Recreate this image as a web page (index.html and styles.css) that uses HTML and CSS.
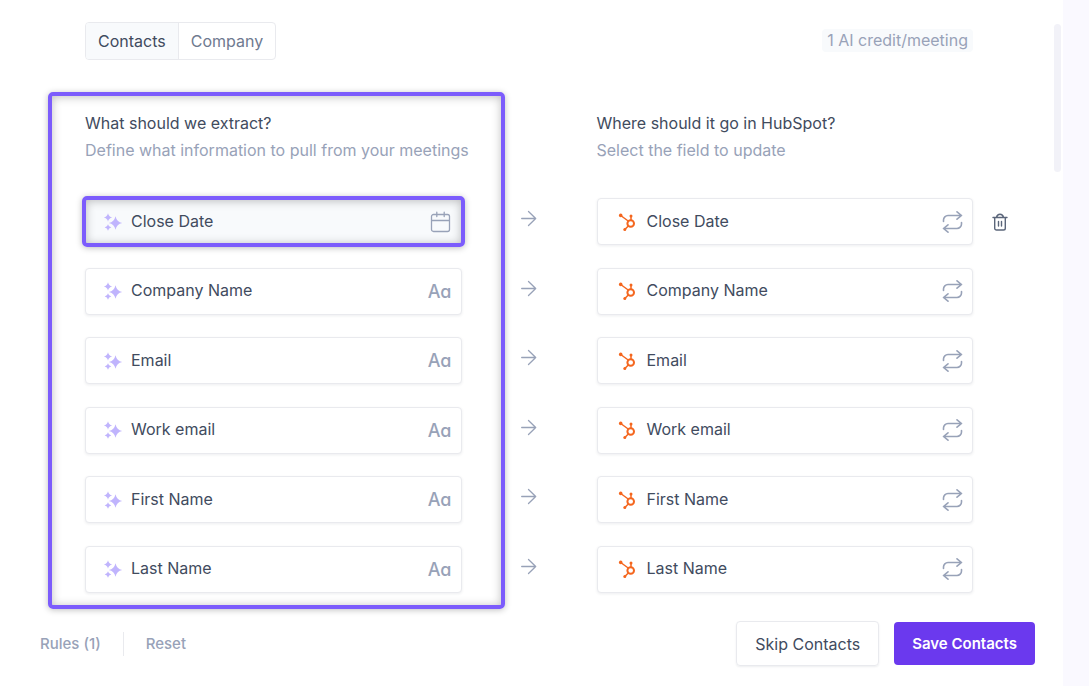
FILE: index.html
```html
<!DOCTYPE html>
<html lang="en">
<head>
    <meta charset="UTF-8">
    <meta name="viewport" content="width=device-width, initial-scale=1.0">
    <title>HubSpot field mapping</title>
    <link rel="stylesheet" href="styles.css">
</head>
<body>

    <!-- Icon sprites -->
    <svg class="sprites" aria-hidden="true">
        <symbol id="i-sparkle" viewBox="0 0 20 20">
            <path fill="currentColor" d="M12.5 4.2Q13.7 9.8 19.2 11Q13.7 12.2 12.5 17.8Q11.3 12.2 5.8 11Q11.3 9.8 12.5 4.2ZM5 1.3Q5.7 4.8 9.2 5.5Q5.7 6.2 5 9.7Q4.3 6.2 0.8 5.5Q4.3 4.8 5 1.3ZM5 12.2Q5.6 14.9 8.3 15.5Q5.6 16.1 5 18.8Q4.4 16.1 1.7 15.5Q4.4 14.9 5 12.2Z"/>
        </symbol>
        <symbol id="i-hubspot" viewBox="0 0 20 20">
            <g fill="none" stroke="currentColor">
                <circle cx="13.7" cy="11.5" r="3.3" stroke-width="2"/>
                <path stroke-width="1.5" d="M3.7 3.5L11.2 9M14 4v4.2M11.3 13.9L7.8 17.5"/>
            </g>
            <g fill="currentColor">
                <circle cx="3.7" cy="3.4" r="1.8"/>
                <circle cx="14" cy="4" r="1.5"/>
                <circle cx="7.8" cy="17.6" r="1.5"/>
            </g>
        </symbol>
        <symbol id="i-swap" viewBox="0 0 22 22">
            <path fill="none" stroke="currentColor" stroke-width="1.6" stroke-linecap="round" stroke-linejoin="round" d="M2.5 10.5V9A4.5 4.5 0 0 1 7 4.5h13.5M16 .8l4.5 3.7L16 8.2M20.5 11.5V13a4.5 4.5 0 0 1-4.5 4.5H2.5M7 13.8l-4.5 3.7L7 21.2"/>
        </symbol>
        <symbol id="i-calendar" viewBox="0 0 22 22">
            <path fill="none" stroke="currentColor" stroke-width="1.3" stroke-linecap="round" d="M3.5 3.5h14a2 2 0 0 1 2 2v13a2 2 0 0 1-2 2h-14a2 2 0 0 1-2-2v-13a2 2 0 0 1 2-2ZM1.5 9.5h18M6.8 1.2v4.3M14.2 1.2v4.3"/>
        </symbol>
        <symbol id="i-arrow" viewBox="0 0 16 16">
            <path fill="none" stroke="currentColor" stroke-width="1.3" stroke-linecap="round" stroke-linejoin="round" d="M.7 8h14M7.5 1l7.2 7-7.2 7"/>
        </symbol>
        <symbol id="i-trash" viewBox="0 0 16 18">
            <path fill="none" stroke="currentColor" stroke-width="1.4" stroke-linecap="round" stroke-linejoin="round" d="M1 4.5h14M4.5 4.3C5 2 6 1.2 8 1.2s3 .8 3.5 3.1M2.7 4.7v10.5a1.8 1.8 0 0 0 1.8 1.8h7a1.8 1.8 0 0 0 1.8-1.8V4.7M6.5 8.5v4.5M9.5 8.5v4.5"/>
        </symbol>
    </svg>

    <main class="panel">
        <header class="panel-header">
            <div class="tabs">
                <button type="button" class="tab active">Contacts</button>
                <button type="button" class="tab">Company</button>
            </div>
            <span class="credit-badge">1 AI credit/meeting</span>
        </header>

        <div class="mapping">
            <section class="column extract">
                <h2>What should we extract?</h2>
                <p>Define what information to pull from your meetings</p>
                <div class="fields">
                    <button type="button" class="field selected"><svg class="icon sparkle"><use href="#i-sparkle"/></svg><span class="field-name">Close Date</span><svg class="icon type-icon"><use href="#i-calendar"/></svg></button>
                    <button type="button" class="field"><svg class="icon sparkle"><use href="#i-sparkle"/></svg><span class="field-name">Company Name</span><span class="type-text">Aa</span></button>
                    <button type="button" class="field"><svg class="icon sparkle"><use href="#i-sparkle"/></svg><span class="field-name">Email</span><span class="type-text">Aa</span></button>
                    <button type="button" class="field"><svg class="icon sparkle"><use href="#i-sparkle"/></svg><span class="field-name">Work email</span><span class="type-text">Aa</span></button>
                    <button type="button" class="field"><svg class="icon sparkle"><use href="#i-sparkle"/></svg><span class="field-name">First Name</span><span class="type-text">Aa</span></button>
                    <button type="button" class="field"><svg class="icon sparkle"><use href="#i-sparkle"/></svg><span class="field-name">Last Name</span><span class="type-text">Aa</span></button>
                </div>
            </section>

            <div class="arrows" aria-hidden="true">
                <svg><use href="#i-arrow"/></svg>
                <svg><use href="#i-arrow"/></svg>
                <svg><use href="#i-arrow"/></svg>
                <svg><use href="#i-arrow"/></svg>
                <svg><use href="#i-arrow"/></svg>
                <svg><use href="#i-arrow"/></svg>
            </div>

            <section class="column target">
                <h2>Where should it go in HubSpot?</h2>
                <p>Select the field to update</p>
                <div class="fields">
                    <button type="button" class="field"><svg class="icon hubspot"><use href="#i-hubspot"/></svg><span class="field-name">Close Date</span><svg class="icon type-icon"><use href="#i-swap"/></svg></button>
                    <button type="button" class="field"><svg class="icon hubspot"><use href="#i-hubspot"/></svg><span class="field-name">Company Name</span><svg class="icon type-icon"><use href="#i-swap"/></svg></button>
                    <button type="button" class="field"><svg class="icon hubspot"><use href="#i-hubspot"/></svg><span class="field-name">Email</span><svg class="icon type-icon"><use href="#i-swap"/></svg></button>
                    <button type="button" class="field"><svg class="icon hubspot"><use href="#i-hubspot"/></svg><span class="field-name">Work email</span><svg class="icon type-icon"><use href="#i-swap"/></svg></button>
                    <button type="button" class="field"><svg class="icon hubspot"><use href="#i-hubspot"/></svg><span class="field-name">First Name</span><svg class="icon type-icon"><use href="#i-swap"/></svg></button>
                    <button type="button" class="field"><svg class="icon hubspot"><use href="#i-hubspot"/></svg><span class="field-name">Last Name</span><svg class="icon type-icon"><use href="#i-swap"/></svg></button>
                </div>
            </section>

            <div class="row-actions">
                <button type="button" class="delete" aria-label="Delete field"><svg><use href="#i-trash"/></svg></button>
            </div>
        </div>

        <footer class="panel-footer">
            <button type="button" class="link">Rules (1)</button>
            <span class="divider"></span>
            <button type="button" class="link">Reset</button>
            <div class="actions">
                <button type="button" class="btn btn-outline">Skip Contacts</button>
                <button type="button" class="btn btn-primary">Save Contacts</button>
            </div>
        </footer>

        <div class="scroll-thumb"></div>
    </main>

</body>
</html>
```

FILE: styles.css
```css
:root {
    --purple: #7c5cfc;
    --primary: #6b39ee;
    --text: #414b5e;
    --muted: #98a2b8;
    --line: #e9eaee;
}

* { box-sizing: border-box; }

body {
    margin: 0;
    min-height: 100vh;
    padding-right: 26px;
    background: #faf9ff;
    color: var(--text);
    font-family: Inter, sans-serif;
    font-size: 16px;
}

button {
    padding: 0;
    border: 0;
    background: none;
    color: inherit;
    font: inherit;
    cursor: pointer;
}

.sprites { position: absolute; width: 0; height: 0; }

.panel {
    position: relative;
    min-height: 100vh;
    padding-top: 22px;
    background: #fff;
}

/* --- Header --- */
.panel-header {
    display: flex;
    justify-content: space-between;
    align-items: center;
    padding: 0 90px 0 85px;
}

.tabs {
    display: flex;
    border: 1px solid var(--line);
    border-radius: 4px;
    overflow: hidden;
}
.tab { height: 36px; padding: 0 12px; color: #6f7a90; }
.tab.active { background: #f8fafc; color: var(--text); }
.tab + .tab { border-left: 1px solid var(--line); }

.credit-badge {
    padding: 0 5px;
    border-radius: 4px;
    background: #f8fafc;
    color: var(--muted);
    line-height: 23px;
    margin-bottom: 2px;
}

/* --- Mapping --- */
.mapping {
    display: grid;
    grid-template-columns: 1fr 135px 1fr 90px;
    padding: 50px 0 0 85px;
}

.column { position: relative; min-width: 0; }
.column h2, .column p {
    margin: 0;
    font-size: 16px;
    font-weight: 400;
    line-height: 27px;
    white-space: nowrap;
}
.column p { color: var(--muted); }

.fields, .arrows {
    display: flex;
    flex-direction: column;
    justify-content: space-between;
}
.fields { min-height: 395px; margin-top: 34px; }

.field {
    position: relative;
    display: flex;
    align-items: center;
    height: 47px;
    padding: 0 9px 0 17px;
    border: 1px solid var(--line);
    border-radius: 4px;
    background: #fff;
    box-shadow: 0 1px 3px rgba(30, 40, 60, 0.08);
    text-align: left;
}
.field-name { flex: 1; padding-bottom: 2px; }

.icon { flex: none; width: 20px; height: 20px; }
.sparkle { margin-right: 8px; color: #c0b4fd; }
.hubspot { margin: 0 10px 0 2px; color: #f4661e; }
.type-icon { width: 22px; height: 22px; color: var(--muted); }
.type-text {
    color: var(--muted);
    font-size: 18px;
    font-weight: 500;
    font-feature-settings: "cv11";
}

/* purple highlight frames */
.extract::after, .selected::after {
    content: "";
    position: absolute;
    border: 4px solid var(--purple);
    border-radius: 5px;
    box-shadow: 0 1px 6px rgba(0, 0, 0, 0.25), inset 0 1px 10px rgba(0, 0, 0, 0.25);
    pointer-events: none;
}
.extract::after { inset: -18px -43px -16px -37px; }
.selected { background: #f8fafc; }
.selected::after { inset: -3px -4px; }

/* arrows sit a little above the row centre */
.arrows {
    align-items: center;
    padding: 85px 0 3px;
}
.arrows svg {
    width: 16px;
    height: 47px;
    color: var(--muted);
}

.row-actions { padding: 88px 0 0 15px; }
.delete {
    display: flex;
    align-items: center;
    justify-content: center;
    width: 24px;
    height: 47px;
    color: #5b667a;
}
.delete svg { width: 16px; height: 18px; }

/* --- Footer --- */
.panel-footer {
    display: flex;
    align-items: center;
    padding: 28px 28px 20px 40px;
}
.link { color: var(--muted); font-size: 15px; font-weight: 500; }
.divider { width: 1px; height: 24px; margin: 0 22px; background: var(--line); }
.actions { display: flex; align-items: center; gap: 15px; margin-left: auto; }

.btn {
    height: 43px;
    padding: 0 18px;
    border-radius: 4px;
}
.btn-outline {
    height: 45px;
    border: 1px solid var(--line);
    box-shadow: 0 1px 2px rgba(30, 40, 60, 0.08);
}
.btn-primary {
    background: var(--primary);
    color: #fff;
    font-size: 15px;
    font-weight: 600;
}

.scroll-thumb {
    position: absolute;
    top: 24px;
    right: 2px;
    width: 7px;
    height: 148px;
    border-radius: 4px;
    background: #f2f2f8;
}
```
